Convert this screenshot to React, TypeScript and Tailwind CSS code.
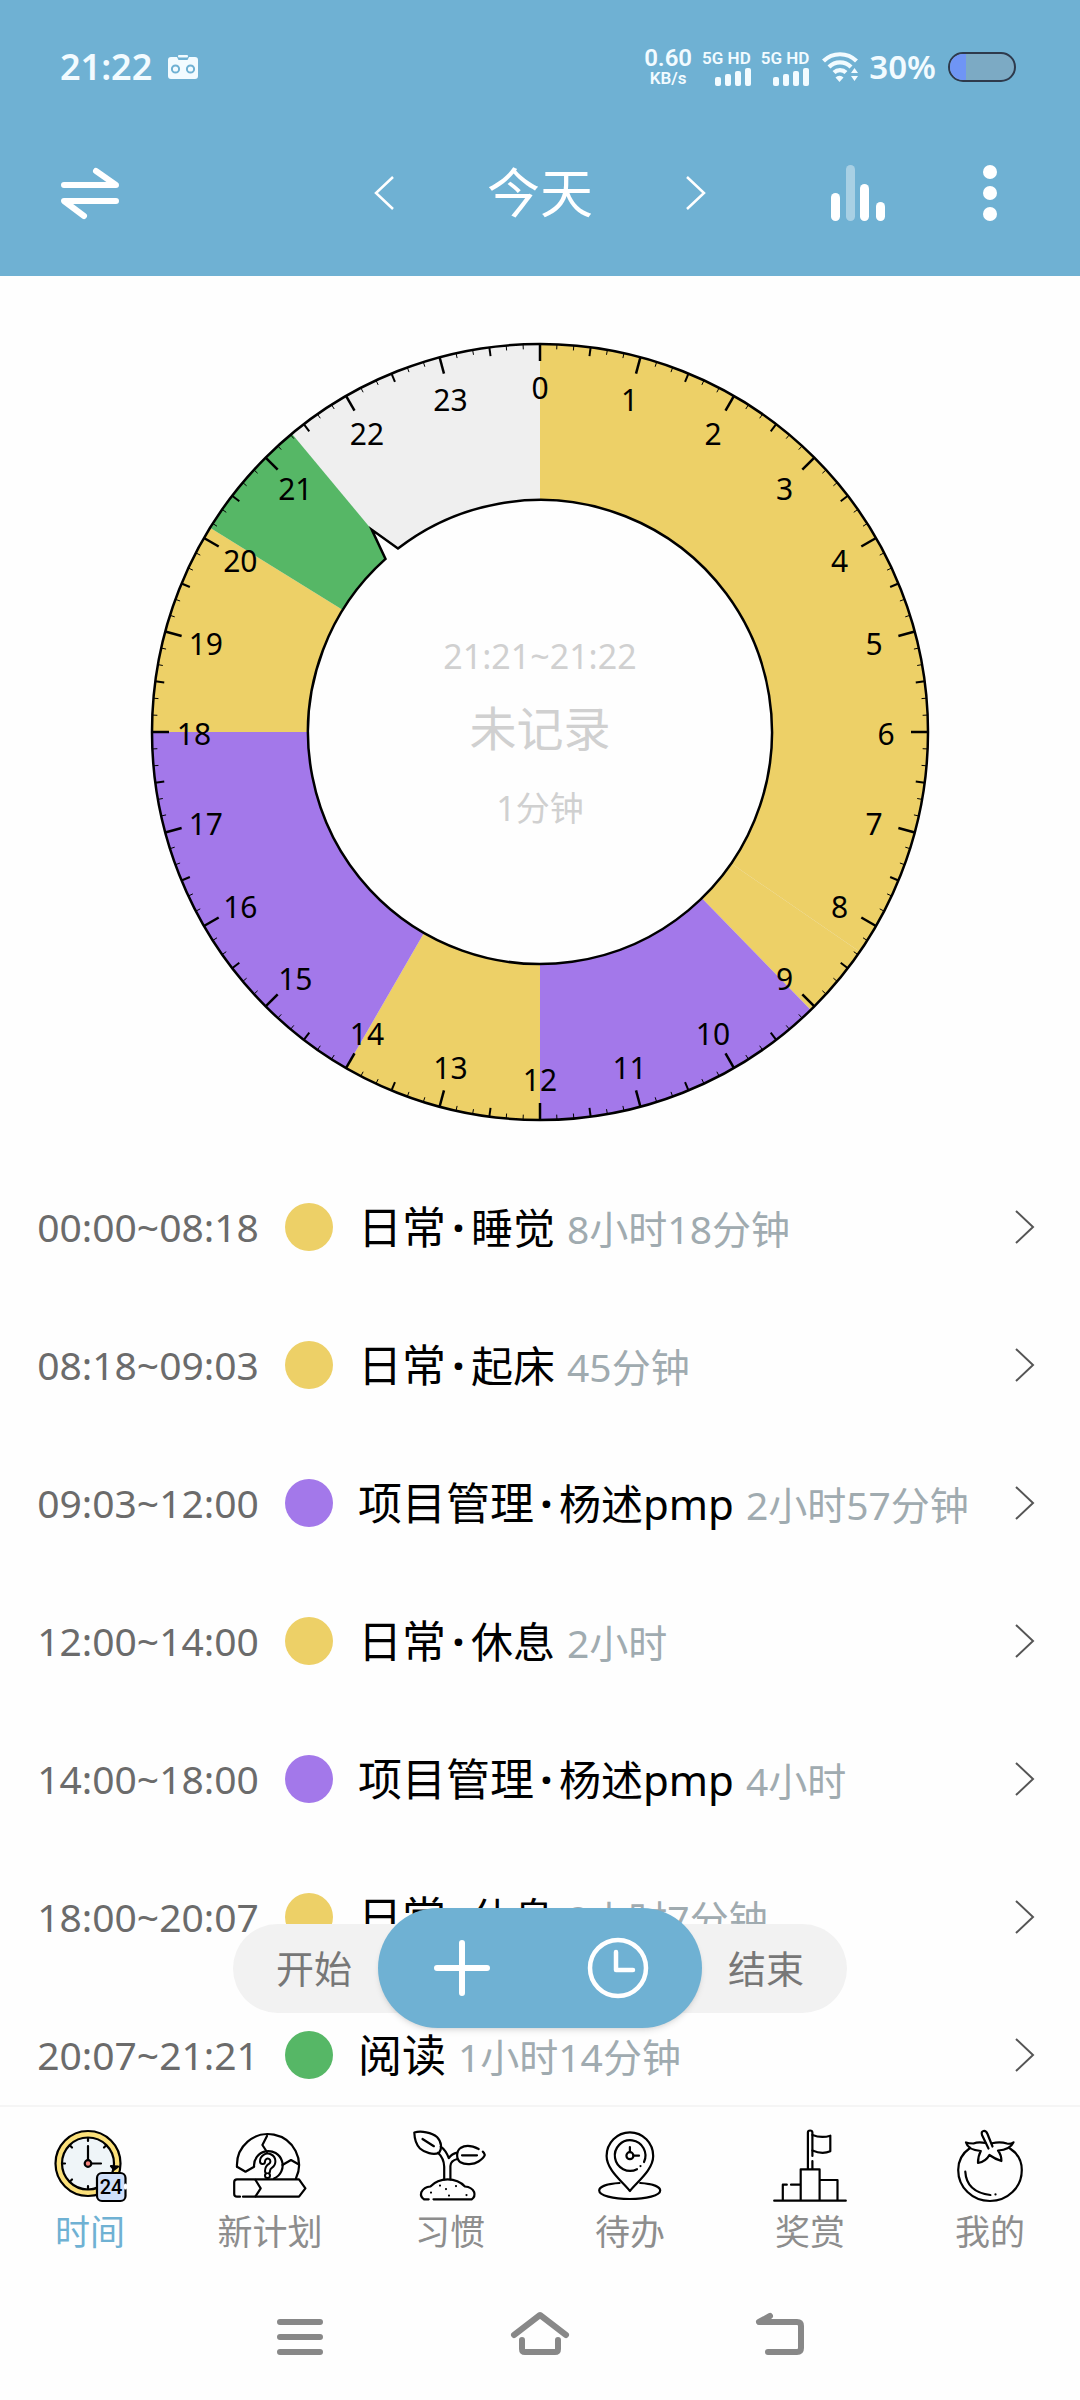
import React from 'react';

// One recorded block of the day, times in minutes since midnight
interface RecordItem {
  from: number;
  to: number;
  category: string;
  title?: string;
  duration: string;
  fill: string;
  dot: string;
}

const YELLOW = '#edd067';
const PURPLE = '#a378ea';
const GREEN = '#56b766';

const records: RecordItem[] = [
  { from: 0, to: 498, category: '日常', title: '睡觉', duration: '8小时18分钟', fill: YELLOW, dot: 'bg-[#edd067]' },
  { from: 498, to: 543, category: '日常', title: '起床', duration: '45分钟', fill: YELLOW, dot: 'bg-[#edd067]' },
  { from: 543, to: 720, category: '项目管理', title: '杨述pmp', duration: '2小时57分钟', fill: PURPLE, dot: 'bg-[#a378ea]' },
  { from: 720, to: 840, category: '日常', title: '休息', duration: '2小时', fill: YELLOW, dot: 'bg-[#edd067]' },
  { from: 840, to: 1080, category: '项目管理', title: '杨述pmp', duration: '4小时', fill: PURPLE, dot: 'bg-[#a378ea]' },
  { from: 1080, to: 1207, category: '日常', title: '休息', duration: '2小时7分钟', fill: YELLOW, dot: 'bg-[#edd067]' },
  { from: 1207, to: 1281, category: '阅读', duration: '1小时14分钟', fill: GREEN, dot: 'bg-[#56b766]' },
];

const formatTime = (minutes: number) =>
  `${String(Math.floor(minutes / 60)).padStart(2, '0')}:${String(minutes % 60).padStart(2, '0')}`;

// Position on the 24h dial, midnight at the top
const polar = (minutes: number, radius: number) => {
  const angle = (minutes / 1440) * Math.PI * 2;
  return { x: Math.sin(angle) * radius, y: -Math.cos(angle) * radius };
};

const OUTER = 388;
const INNER = 232;
const NOW = 1281;

const slicePath = (from: number, to: number) => {
  const a = polar(from, OUTER);
  const b = polar(to, OUTER);
  const large = to - from > 720 ? 1 : 0;
  return `M0 0L${a.x} ${a.y}A${OUTER} ${OUTER} 0 ${large} 1 ${b.x} ${b.y}Z`;
};

// Inner hole, with a pointer notch at the given time
const holePath = (minutes: number) => {
  const a = polar(minutes + 8, INNER);
  const b = polar(minutes - 8, INNER);
  const tip = polar(minutes, INNER + 31);
  return `M${a.x} ${a.y}A${INNER} ${INNER} 0 1 1 ${b.x} ${b.y}L${tip.x} ${tip.y}Z`;
};

const SignalIcon: React.FC = () => (
  <div className="ml-[10px] flex flex-col items-end font-['Roboto']">
    <span className="text-[17px] leading-5 font-semibold">5G HD</span>
    <svg width="36" height="18" viewBox="0 0 36 18" fill="currentColor">
      <rect x="0" y="9" width="6" height="9" rx="2" />
      <rect x="10" y="6" width="6" height="12" rx="2" />
      <rect x="20" y="3" width="6" height="15" rx="2" />
      <rect x="30" y="0" width="6" height="18" rx="2" />
    </svg>
  </div>
);

const StatusBar: React.FC = () => (
  <div className="flex items-center justify-between pl-[60px] pr-16 pt-11 text-[#f2fbff]">
    <div className="flex items-center gap-4">
      <span className="text-[36px] leading-[46px] font-semibold">21:22</span>
      <svg width="30" height="26" viewBox="0 0 30 26">
        <path d="M3 3h6l1.500 3h9L21 3h6a3 3 0 0 1 3 3v16a3 3 0 0 1-3 3H3a3 3 0 0 1-3-3V6a3 3 0 0 1 3-3z" fill="currentColor" />
        <rect x="10" y="1" width="10" height="2.500" rx="1" fill="currentColor" />
        <circle cx="7.500" cy="15" r="3.600" fill="none" stroke="#6fb1d3" strokeWidth="2" />
        <circle cx="22.500" cy="15" r="3.600" fill="none" stroke="#6fb1d3" strokeWidth="2" />
      </svg>
    </div>
    <div className="flex items-center">
      <div className="flex flex-col items-center font-['Roboto'] font-semibold">
        <span className="text-[24px] leading-[22px]">0.60</span>
        <span className="text-[17px] leading-[18px]">KB/s</span>
      </div>
      <SignalIcon />
      <SignalIcon />
      <svg className="ml-3" width="38" height="32" viewBox="0 0 38 32" fill="none" stroke="currentColor" strokeWidth="4.200">
        <path d="M2.500 10a23.500 23.500 0 0 1 33 0" />
        <path d="M8 16a15.500 15.500 0 0 1 22 0" />
        <path d="M13 21.500a8.600 8.600 0 0 1 12 0" />
        <path d="M14.500 26.500a5.500 5.500 0 0 1 8 0L18.500 31z" fill="currentColor" stroke="none" />
        <path d="M33.500 17l3.500 5h-7zM33.500 30l3.500-5h-7z" fill="currentColor" stroke="none" />
      </svg>
      <span className="ml-[10px] text-[33px] leading-[46px] font-semibold">30%</span>
      <div className="ml-3 flex h-[30px] w-[68px] overflow-hidden rounded-full border-2 border-[#2e3a4c] bg-[#7caac4]">
        <div className="w-4 bg-[#6f95f5]" />
      </div>
    </div>
  </div>
);

const Header: React.FC = () => (
  <header className="bg-[#6fb1d3] pb-[41px] text-white">
    <StatusBar />
    <div className="mt-[61px] flex h-[84px] items-center justify-between px-[60px]">
      <button aria-label="切换" className="w-[190px]">
        <svg width="60" height="54" viewBox="0 0 60 54" fill="none" stroke="currentColor" strokeWidth="6" strokeLinecap="round" strokeLinejoin="round">
          <path d="M4 19h52L36 5M56 35H4l20 15" />
        </svg>
      </button>
      <div className="flex w-[332px] items-center justify-between">
        <button aria-label="前一天">
          <svg width="20" height="36" viewBox="0 0 20 36" fill="none" stroke="currentColor" strokeWidth="2.500">
            <path d="M19 2L2 18l17 16" />
          </svg>
        </button>
        <h1 className="text-[53px] leading-[84px]">今天</h1>
        <button aria-label="后一天">
          <svg width="20" height="36" viewBox="0 0 20 36" fill="none" stroke="currentColor" strokeWidth="2.500">
            <path d="M1 2l17 16L1 34" />
          </svg>
        </button>
      </div>
      <div className="flex w-[190px] items-center justify-between pr-[22px]">
        <button aria-label="统计">
          <svg width="56" height="56" viewBox="0 0 56 56" fill="currentColor">
            <rect x="1" y="28" width="9" height="28" rx="4.500" />
            <rect x="16" y="0" width="9" height="56" rx="4.500" opacity="0.4" />
            <rect x="30" y="19" width="9" height="37" rx="4.500" />
            <rect x="46" y="37" width="9" height="19" rx="4.500" />
          </svg>
        </button>
        <button aria-label="更多">
          <svg width="16" height="56" viewBox="0 0 16 56" fill="currentColor">
            <circle cx="8" cy="7" r="7" />
            <circle cx="8" cy="28" r="7" />
            <circle cx="8" cy="49" r="7" />
          </svg>
        </button>
      </div>
    </div>
  </header>
);

const DayDial: React.FC = () => {
  const ticks = Array.from({ length: 144 }, (_, i) => {
    const length = i % 6 === 0 ? 17 : i % 3 === 0 ? 9 : 5;
    const width = i % 6 === 0 ? 2.5 : i % 3 === 0 ? 2 : 1;
    const a = polar(i * 10, OUTER);
    const b = polar(i * 10, OUTER - length);
    return <line key={i} x1={a.x} y1={a.y} x2={b.x} y2={b.y} strokeWidth={width} />;
  });

  return (
    <section className="relative mx-auto mt-[66px] mb-9 w-[780px]">
      <svg className="w-full" viewBox="-390 -390 780 780">
        <circle r={OUTER} fill="#efefef" />
        {records.map((r) => (
          <path key={r.from} d={slicePath(r.from, r.to)} fill={r.fill} />
        ))}
        <g stroke="#000">{ticks}</g>
        <circle r={OUTER} fill="none" stroke="#000" strokeWidth="2.500" />
        <path d={holePath(NOW)} fill="#fefefe" stroke="#000" strokeWidth="2.500" />
        <g className="text-[30px]" textAnchor="middle">
          {Array.from({ length: 24 }, (_, hour) => {
            const p = polar(hour * 60, 346);
            return (
              <text key={hour} x={p.x} y={p.y + 13}>
                {hour}
              </text>
            );
          })}
        </g>
      </svg>
      <div className="absolute inset-0 flex flex-col items-center justify-center text-[34px] leading-[48px] text-[#d0d0d0]">
        <p>21:21~21:22</p>
        <p className="mt-6 mb-8 text-[47px]">未记录</p>
        <p>1分钟</p>
      </div>
    </section>
  );
};

const RecordRow: React.FC<{ record: RecordItem }> = ({ record }) => (
  <li>
    <button className="flex h-[138px] w-full items-center pr-[45px] pl-6 text-left">
      <span className="w-[248px] text-center text-[39px] text-[#6b6b6b]">
        {formatTime(record.from)}~{formatTime(record.to)}
      </span>
      <span className={`ml-[13px] h-12 w-12 rounded-full ${record.dot}`} />
      <span className="ml-[25px] flex flex-1 items-baseline text-[42px] text-black">
        <span className="text-[44px]">{record.category}</span>
        {record.title && (
          <>
            <span className="w-[25px] text-center text-[44px] font-bold">·</span>
            <span>{record.title}</span>
          </>
        )}
        <span className="ml-3 text-[39px] text-[#a0abb0]">{record.duration}</span>
      </span>
      <svg width="20" height="36" viewBox="0 0 20 36" fill="none" stroke="#555" strokeWidth="2">
        <path d="M1 2l17 16L1 34" />
      </svg>
    </button>
  </li>
);

const ActionPill: React.FC = () => (
  <div className="absolute inset-x-0 bottom-[77px] flex justify-center">
    <div className="flex h-[120px] items-center text-[38px] text-[#777]">
      <button className="-mr-[60px] h-[89px] w-[205px] rounded-l-full bg-[#f2f2f2] pl-[43px] text-left">开始</button>
      <div className="relative flex h-[120px] w-[324px] items-center justify-between rounded-full bg-[#6fb1d3] px-[52px] shadow-md">
        <button aria-label="添加">
          <svg width="64" height="64" viewBox="0 0 64 64" stroke="#fff" strokeWidth="6" strokeLinecap="round">
            <path d="M32 7v50M7 32h50" />
          </svg>
        </button>
        <button aria-label="计时">
          <svg width="64" height="64" viewBox="0 0 64 64" fill="none" stroke="#fff" strokeWidth="4.500" strokeLinecap="round" strokeLinejoin="round">
            <circle cx="32" cy="32" r="28" />
            <path d="M30 16v18h17" />
          </svg>
        </button>
      </div>
      <button className="-ml-[60px] h-[89px] w-[205px] rounded-r-full bg-[#f2f2f2] pr-[43px] text-right">结束</button>
    </div>
  </div>
);

const TimeIcon = () => (
  <>
    <circle cx="36" cy="35.500" r="32.500" fill="#fbe07a" />
    <circle cx="36" cy="35.500" r="26" fill="#eff5f8" />
    <path d="M36 10v3M10 35.500h3M18 17.500l2 2M54 17.500l-2 2M18 53.500l2-2M36 61v-3M36 18v14M39 35.500h10" />
    <circle cx="36" cy="35.500" r="3.300" fill="#f5867f" />
    <path d="M59 38l3 3.500 4-3z" fill="#000" />
    <rect x="45" y="45" width="28.500" height="28" rx="5" fill="#d0e0fa" />
    <path d="M73.500 57v3" stroke="#fff" strokeWidth="3" />
    <text x="59" y="66" textAnchor="middle" fill="#000" stroke="none" className="font-['Roboto'] text-[20px] font-medium">24</text>
  </>
);

const PlanIcon = () => (
  <>
    <path d="M5 38.700A31 31 0 1 1 64 50.300" />
    <path d="M5 38.700l8.500 5 8.600-5A14.300 14.300 0 1 1 42 50.500" />
    <path d="M35 8l-4.600 9 4.600 7M50.400 37l8.600-5 7 4" />
    <path d="M30.500 33.500a5.200 5.200 0 1 1 8 4.200q-3 1.800-3 5.300M35.500 47.500v.1" strokeWidth="7" />
    <path d="M30.500 33.500a5.200 5.200 0 1 1 8 4.200q-3 1.800-3 5.300M35.500 47.500v.1" stroke="#fff" strokeWidth="3" />
    <path d="M8 68.700H5q-2.800 0-2.800-2.800V54q0-2.700 2.800-2.700h62l6.400 9-6.400 8.400H11" />
    <path d="M23.500 52l5.200 8.300-5.200 8" />
  </>
);

const HabitIcon = () => (
  <>
    <path d="M2.300 4.500C9 2.500 20 4.500 25 9c5 5 5 12 2 16-6 2-14 0-19-4.500C4 16.500 2.500 11 2.300 4.500z" />
    <path d="M10.500 11l11.400 7.200M50 27.300h15" />
    <path d="M66.700 21C60 17.500 53 17 48.500 20c-4.500 3.500-4.500 11 0 14.300C53 37 62 36.500 66.500 33.500c3-2 5.500-4 6.300-6.500q-.5-2-2-3.300" />
    <path d="M28.800 18.700q5 3.500 8 11.500 3-4.500 8.500-5.500M26 24.700q6 5.500 6.200 14v12.600M38.400 51.300V38q.3-5.500 7-7" />
    <path d="M16.700 71.300H12q-4-2.500-2.700-7Q12 59 18.400 58.500 25 51.300 35.700 51.300T52.900 58.500q7 .5 9.300 5.800 1.300 4.500-2.500 7H21.500" />
    <path d="M28 57.500v.1M34 61v.1M44 58v.1M19 64.500v.1M37 67.500v.1M54.500 67v.1" />
  </>
);

const TodoIcon = () => (
  <>
    <path d="M37.900 63C31 54 14.600 42 14.600 28a23.300 23.700 0 0 1 46.600 0c0 14-16.400 26-23.300 35z" />
    <path d="M45 41.200A15.300 15.300 0 1 1 52 34M48.500 38v.1" />
    <circle cx="37.900" cy="27.700" r="3.500" />
    <path d="M37.900 24v-5M41.500 27.700H47" />
    <path d="M27.500 55C16 55.700 7.200 58.500 7.200 62.500c0 5 14 8.500 30.500 8.500s30.500-3.500 30.500-8.500c0-4-8.700-6.800-20-7.500" />
  </>
);

const RewardIcon = () => (
  <>
    <path d="M35.900 41V4.500q0-2 2.200-2t2.300 2V28M40.400 33v8" />
    <path d="M40.400 7q9 3.500 17.900.7v15.500q-8 3.500-17.900-.7" />
    <path d="M28.700 72.700V41.300h18.900v31.400M47.600 52h17.900v20.700M10.800 72.700v-16h4M19 56.700h9.700M2.200 72.700h71.600" />
  </>
);

const MineIcon = () => (
  <>
    <path d="M18 20C10 25.500 6.200 33 6.200 42c0 17.500 14.200 31 31.800 31s31.800-13.500 31.800-31c0-9-4-16.500-11.800-21.500" />
    <path d="M33.500 15q-7-1.500-12 .5-5 0-7.500-1 2 7.500 14.800 8.500Q26 28 26 35q8-1.500 11.400-8Q43 31 49.400 33 49.500 27 46 22.500 58 22 61.500 14.300q-3 2-6.500 1.200-7-2-15-.2" />
    <path d="M36.500 20.500L30 7q-1-3.500 1.500-4t4 3l5 12.500" />
    <path d="M13.300 43.700Q14.500 64 38.400 67M43.500 66.300v.1" />
  </>
);

const tabs = [
  { label: '时间', Icon: TimeIcon, active: true },
  { label: '新计划', Icon: PlanIcon },
  { label: '习惯', Icon: HabitIcon },
  { label: '待办', Icon: TodoIcon },
  { label: '奖赏', Icon: RewardIcon },
  { label: '我的', Icon: MineIcon },
];

const TabBar: React.FC = () => (
  <nav className="grid grid-cols-6 border-t-2 border-[#f5f5f5] pt-[21px] pb-4">
    {tabs.map(({ label, Icon, active }) => (
      <a key={label} href="#" className={`flex flex-col items-center gap-[2px] text-[35px] leading-[52px] ${active ? 'text-[#6fb1d3]' : 'text-[#8d8d8d]'}`}>
        <svg width="76" height="76" viewBox="0 0 76 76" fill="none" stroke="#000" strokeWidth="2.200" strokeLinecap="round" strokeLinejoin="round">
          <Icon />
        </svg>
        {label}
      </a>
    ))}
  </nav>
);

// Android navigation keys
const SystemBar: React.FC = () => (
  <div className="flex h-[126px] items-center justify-center gap-[180px] text-[#888]">
    <button aria-label="最近任务">
      <svg width="60" height="60" viewBox="0 0 60 60" stroke="currentColor" strokeWidth="6" strokeLinecap="round">
        <path d="M10 15h40M10 30h40M10 45h40" />
      </svg>
    </button>
    <button aria-label="主页">
      <svg width="60" height="60" viewBox="0 0 60 60" fill="none" stroke="currentColor" strokeWidth="6" strokeLinecap="round" strokeLinejoin="round">
        <path d="M4 28L30 8l26 20M12 33v9q0 3 3 3h30q3 0 3-3v-9" />
      </svg>
    </button>
    <button aria-label="返回">
      <svg width="60" height="60" viewBox="0 0 60 60" fill="none" stroke="currentColor" strokeWidth="6" strokeLinecap="round" strokeLinejoin="round">
        <path d="M20 9L9 15h38q4 0 4 4v22q0 4-4 4H18" />
      </svg>
    </button>
  </div>
);

export default function App() {
  return (
    <div className="flex h-screen flex-col bg-[#fefefe] font-['Noto_Sans','Noto_Sans_CJK_SC',sans-serif]">
      <Header />
      <main className="relative min-h-0 flex-1 overflow-hidden">
        <DayDial />
        <ul>
          {records.map((record) => (
            <RecordRow key={record.from} record={record} />
          ))}
        </ul>
        <ActionPill />
      </main>
      <TabBar />
      <SystemBar />
    </div>
  );
}
